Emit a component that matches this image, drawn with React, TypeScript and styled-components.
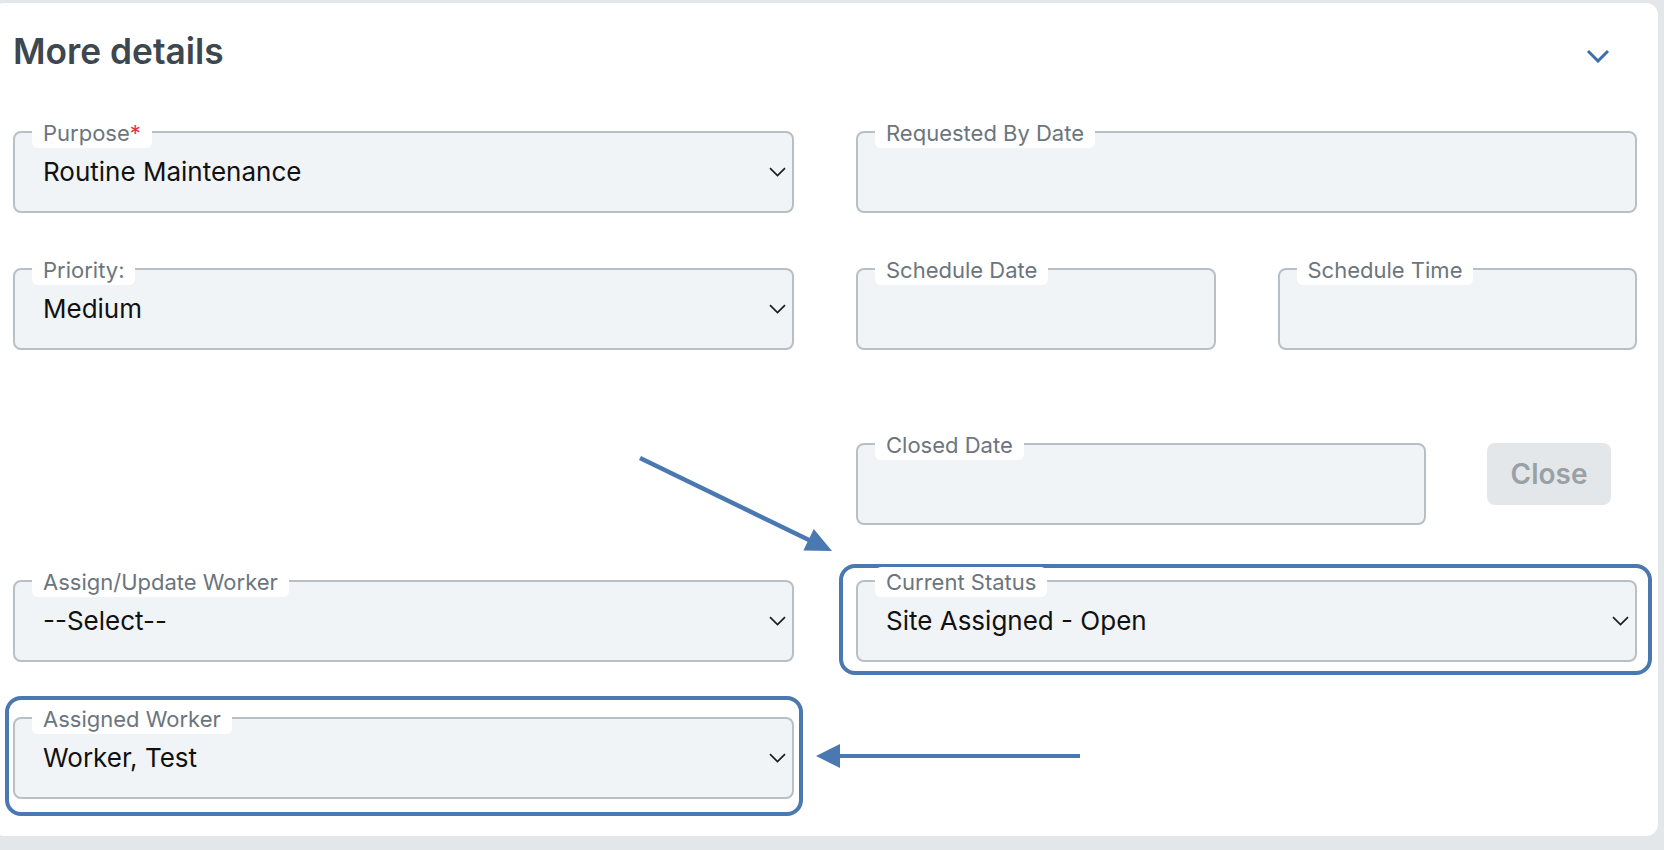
import React from "react";
import styled, { createGlobalStyle } from "styled-components";

const Global = createGlobalStyle`
  html, body { margin: 0; padding: 0; }
  body {
    background: #e3e7ea;
    font-family: Inter, "Noto Sans", "Liberation Sans", sans-serif;
    width: 1664px;
    height: 850px;
    overflow: hidden;
  }
`;

const Page = styled.div`
  position: relative;
  width: 1664px;
  height: 850px;
  padding: 3px 6px 14px 0;
  box-sizing: border-box;
  display: flex;
`;

const Card = styled.section`
  flex: 1;
  margin-left: -8px;
  background: #ffffff;
  border-radius: 12px;
  padding: 26.5px 21px 0 21px;
  box-sizing: border-box;
  display: flex;
  flex-direction: column;
`;

const Header = styled.header`
  display: flex;
  justify-content: space-between;
  align-items: flex-start;
`;

const Title = styled.h2`
  margin: 0;
  font-size: 35.3px;
  line-height: 43.2px;
  font-weight: 600;
  color: #3c474f;
  letter-spacing: 0;
`;

const Toggle = styled.svg`
  margin-top: 19.5px;
  margin-right: 27px;
`;

const Form = styled.div`
  margin-top: 58.3px;
  display: flex;
  flex-direction: column;
  gap: 55px;
`;

const Row = styled.div<{ $extraTop?: number }>`
  display: grid;
  grid-template-columns: 781px 781px;
  column-gap: 62px;
  margin-top: ${(p) => p.$extraTop ?? 0}px;
`;

const Pair = styled.div`
  display: grid;
  grid-template-columns: 1fr 1fr;
  column-gap: 62px;
`;

const CloseRow = styled.div`
  display: flex;
  align-items: flex-start;
  gap: 61px;
`;

const FieldWrap = styled.div<{ $width?: number }>`
  position: relative;
  width: ${(p) => (p.$width ? `${p.$width}px` : "auto")};
  flex: none;
`;

const Box = styled.div`
  height: 82px;
  box-sizing: border-box;
  border: 2px solid #b8bfc5;
  border-radius: 8px;
  background: #f1f4f6;
  display: flex;
  justify-content: space-between;
  align-items: flex-start;
  padding: 23.5px 6px 0 28px;
`;

const Label = styled.label`
  position: absolute;
  top: -13px;
  left: 19px;
  height: 30px;
  padding: 0 11px;
  background: #ffffff;
  border-radius: 6px;
  font-size: 22px;
  line-height: 30px;
  color: #6c757d;
  white-space: nowrap;
`;

const Required = styled.span`
  color: #dc3545;
`;

const Value = styled.span`
  font-size: 26px;
  line-height: 30px;
  color: #111111;
`;

const Caret = styled.svg`
  align-self: center;
  margin-top: -23.5px;
  flex: none;
`;

const Highlight = styled.div<{ $t: number; $l: number; $r: number; $b: number }>`
  position: absolute;
  top: ${(p) => p.$t}px;
  left: ${(p) => p.$l}px;
  right: ${(p) => p.$r}px;
  bottom: ${(p) => p.$b}px;
  border: 4px solid #4a78b0;
  border-radius: 16px;
  pointer-events: none;
`;

const CloseButton = styled.button`
  width: 124px;
  height: 62px;
  border: none;
  border-radius: 8px;
  background: #e3e7ea;
  color: #9aa1a6;
  font-family: inherit;
  font-size: 28px;
  font-weight: 600;
  padding: 0;
`;

const Annotations = styled.svg`
  position: absolute;
  left: 0;
  top: 0;
  pointer-events: none;
`;

type HL = { t: number; l: number; r: number; b: number };

function Field({
  label,
  value,
  required,
  select,
  width,
  highlight,
}: {
  label: string;
  value?: string;
  required?: boolean;
  select?: boolean;
  width?: number;
  highlight?: HL;
}) {
  return (
    <FieldWrap $width={width}>
      {highlight && (
        <Highlight $t={highlight.t} $l={highlight.l} $r={highlight.r} $b={highlight.b} />
      )}
      <Box>
        <Value>{value}</Value>
        {select && (
          <Caret width="17" height="10" viewBox="0 0 17 10">
            <path d="M1 1.2 L8.5 8.6 L16 1.2" fill="none" stroke="#1b1e21" strokeWidth="1.7" />
          </Caret>
        )}
      </Box>
      <Label>
        {label}
        {required && <Required>*</Required>}
      </Label>
    </FieldWrap>
  );
}

const Empty = styled.div``;

export default function App() {
  return (
    <>
      <Global />
      <Page>
        <Card>
          <Header>
            <Title>More details</Title>
            <Toggle width="24" height="14" viewBox="0 0 24 14">
              <path d="M2 2 L12 12 L22 2" fill="none" stroke="#3d6eae" strokeWidth="3" />
            </Toggle>
          </Header>
          <Form>
            <Row>
              <Field label="Purpose" required value="Routine Maintenance" select />
              <Field label="Requested By Date" />
            </Row>
            <Row>
              <Field label="Priority:" value="Medium" select />
              <Pair>
                <Field label="Schedule Date" />
                <Field label="Schedule Time" />
              </Pair>
            </Row>
            <Row $extraTop={38}>
              <Empty />
              <CloseRow>
                <Field label="Closed Date" width={570} />
                <CloseButton>Close</CloseButton>
              </CloseRow>
            </Row>
            <Row>
              <Field label="Assign/Update Worker" value="--Select--" select />
              <Field
                label="Current Status"
                value="Site Assigned - Open"
                select
                highlight={{ t: -16, l: -17, r: -15, b: -13 }}
              />
            </Row>
            <Row>
              <Field
                label="Assigned Worker"
                value="Worker, Test"
                select
                highlight={{ t: -21, l: -8, r: -9, b: -17 }}
              />
              <Empty />
            </Row>
          </Form>
        </Card>
        <Annotations width="1664" height="850" viewBox="0 0 1664 850">
          <line x1="640" y1="458" x2="810" y2="540.5" stroke="#4a78b0" strokeWidth="4.5" />
          <polygon points="832,551 803.4,550.5 813.8,528.9" fill="#4a78b0" />
          <line x1="1080" y1="756" x2="838" y2="756" stroke="#4a78b0" strokeWidth="4" />
          <polygon points="816,756 840,744 840,768" fill="#4a78b0" />
        </Annotations>
      </Page>
    </>
  );
}
